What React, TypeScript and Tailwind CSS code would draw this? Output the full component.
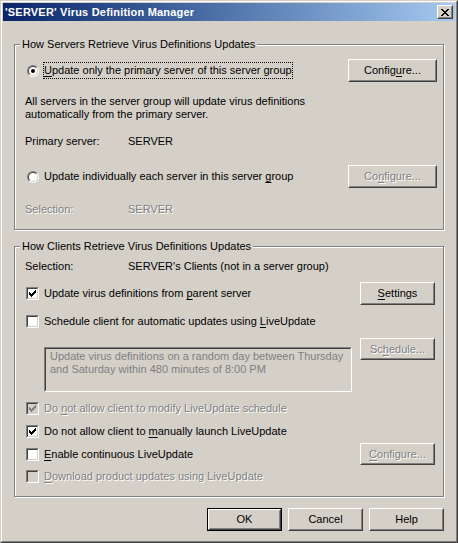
import React from "react";

const DIS = "text-[#808080] [text-shadow:1px_1px_0_#ffffff]";

function Radio({ checked }: { checked?: boolean }) {
  return (
    <span className="flex w-[12px] h-[12px] shrink-0 rounded-full border border-t-[#808080] border-l-[#808080] border-r-white border-b-white">
      <span className="flex flex-1 items-center justify-center rounded-full border border-t-[#404040] border-l-[#404040] border-r-[#D4D0C8] border-b-[#D4D0C8] bg-white">
        {checked && <span className="w-[4px] h-[4px] rounded-full bg-black" />}
      </span>
    </span>
  );
}

function Check({ checked, disabled }: { checked?: boolean; disabled?: boolean }) {
  return (
    <span className="flex w-[13px] h-[13px] shrink-0 border border-t-[#808080] border-l-[#808080] border-r-white border-b-white">
      <span
        className={
          "flex flex-1 items-center justify-center border border-t-[#404040] border-l-[#404040] border-r-[#D4D0C8] border-b-[#D4D0C8] " +
          (disabled ? "bg-[#D4D0C8]" : "bg-white")
        }
      >
        {checked && (
          <svg width="7" height="7" viewBox="0 0 7 7" shapeRendering="crispEdges" fill={disabled ? "#808080" : "#000000"}>
            <rect x="6" y="0" width="1" height="1" />
            <rect x="5" y="1" width="2" height="1" />
            <rect x="0" y="2" width="1" height="1" />
            <rect x="4" y="2" width="3" height="1" />
            <rect x="0" y="3" width="2" height="1" />
            <rect x="3" y="3" width="3" height="1" />
            <rect x="0" y="4" width="5" height="1" />
            <rect x="1" y="5" width="3" height="1" />
            <rect x="2" y="6" width="1" height="1" />
          </svg>
        )}
      </span>
    </span>
  );
}

function Btn({
  children,
  disabled,
  isDefault,
  className = "",
}: {
  children: React.ReactNode;
  disabled?: boolean;
  isDefault?: boolean;
  className?: string;
}) {
  const face = (
    <span className="flex flex-1 border border-t-white border-l-white border-r-[#404040] border-b-[#404040]">
      <span
        className={
          "flex flex-1 items-center justify-center border border-t-[#D4D0C8] border-l-[#D4D0C8] border-r-[#808080] border-b-[#808080] " +
          (disabled ? DIS : "")
        }
      >
        {children}
      </span>
    </span>
  );
  return (
    <div className={"flex shrink-0 bg-[#D4D0C8] " + (isDefault ? "border border-black " : "") + className}>
      {face}
    </div>
  );
}

function U({ children }: { children: React.ReactNode }) {
  return <span className="underline underline-offset-[2px]">{children}</span>;
}

function CheckRow({
  checked,
  disabled,
  children,
  className = "",
}: {
  checked?: boolean;
  disabled?: boolean;
  children: React.ReactNode;
  className?: string;
}) {
  return (
    <div className={"flex items-center h-[13px] ml-[1px] " + className}>
      <Check checked={checked} disabled={disabled} />
      <span className={"ml-[5px] whitespace-nowrap " + (disabled ? DIS : "")}>{children}</span>
    </div>
  );
}

export default function App() {
  return (
    <div className="w-[458px] h-[543px] bg-[#D4D0C8] border border-t-[#D4D0C8] border-l-[#D4D0C8] border-r-[#404040] border-b-[#404040] font-['Liberation_Sans',Arial,sans-serif] text-[11px] leading-[13px] text-black select-none">
      <div className="flex flex-col h-full border border-t-white border-l-white border-r-[#808080] border-b-[#808080] p-[1px]">
        {/* title bar */}
        <div className="flex items-center h-[18px] bg-linear-to-r from-[#0A246A] to-[#A6CAF0] pl-[2px] pr-[2px]">
          <span className="flex-1 font-bold text-white whitespace-nowrap tracking-[0.2px]">'SERVER' Virus Definition Manager</span>
          <Btn className="w-[16px] h-[14px]">
            <svg width="8" height="7" viewBox="0 0 8 7" shapeRendering="crispEdges" fill="#000">
              <rect x="0" y="0" width="2" height="1" />
              <rect x="6" y="0" width="2" height="1" />
              <rect x="1" y="1" width="2" height="1" />
              <rect x="5" y="1" width="2" height="1" />
              <rect x="2" y="2" width="4" height="1" />
              <rect x="3" y="3" width="2" height="1" />
              <rect x="2" y="4" width="4" height="1" />
              <rect x="1" y="5" width="2" height="1" />
              <rect x="5" y="5" width="2" height="1" />
              <rect x="0" y="6" width="2" height="1" />
              <rect x="6" y="6" width="2" height="1" />
            </svg>
          </Btn>
        </div>

        <div className="flex flex-col px-[11px]">
          {/* servers group */}
          <fieldset className="mt-[17px] border border-[#808080] [box-shadow:inset_1px_1px_0_#ffffff,1px_1px_0_#ffffff] pl-[10px] pr-[6px] pb-[13px]">
            <legend className="-ml-[5px] px-[2px] leading-[13px] bg-[#D4D0C8]">How Servers Retrieve Virus Definitions Updates</legend>
            <div className="flex items-center h-[23px] mt-[8px]">
              <span className="ml-[2px]">
                <Radio checked />
              </span>
              <span className="ml-[4px] border border-dotted border-black leading-[15px] whitespace-nowrap">
                <U>U</U>pdate only the primary server of this server group
              </span>
              <Btn className="ml-auto w-[89px] h-[23px]">
                Config<U>u</U>re...
              </Btn>
            </div>
            <p className="mt-[13px]">
              All servers in the server group will update virus definitions
              <br />
              automatically from the primary server.
            </p>
            <div className="flex mt-[14px]">
              <span className="w-[103px]">Primary server:</span>
              <span>SERVER</span>
            </div>
            <div className="flex items-center h-[23px] mt-[17px]">
              <span className="ml-[2px]">
                <Radio />
              </span>
              <span className="ml-[5px] whitespace-nowrap">
                Update individually each server in this server <U>g</U>roup
              </span>
              <Btn disabled className="ml-auto w-[89px] h-[23px]">
                Co<U>n</U>figure...
              </Btn>
            </div>
            <div className={"flex mt-[15px] " + DIS}>
              <span className="w-[103px]">Selection:</span>
              <span>SERVER</span>
            </div>
          </fieldset>

          {/* clients group */}
          <fieldset className="mt-[10px] border border-[#808080] [box-shadow:inset_1px_1px_0_#ffffff,1px_1px_0_#ffffff] pl-[10px] pr-[8px] pb-[13px]">
            <legend className="-ml-[5px] px-[2px] leading-[13px] bg-[#D4D0C8]">How Clients Retrieve Virus Definitions Updates</legend>
            <div className="flex mt-[7px]">
              <span className="w-[103px]">Selection:</span>
              <span>SERVER's Clients (not in a server group)</span>
            </div>
            <div className="flex items-center h-[23px] mt-[9px]">
              <CheckRow checked>
                Update virus definitions from <U>p</U>arent server
              </CheckRow>
              <Btn className="ml-auto w-[75px] h-[23px]">
                <U>S</U>ettings
              </Btn>
            </div>
            <CheckRow className="mt-[10px]">
              Schedule client for automatic updates using <U>L</U>iveUpdate
            </CheckRow>
            <div className="flex items-start mt-[10px]">
              <div className="ml-[19px] mt-[9px] w-[308px] h-[45px] flex border border-t-[#808080] border-l-[#808080] border-r-white border-b-white">
                <div className="flex-1 border border-t-[#404040] border-l-[#404040] border-r-[#D4D0C8] border-b-[#D4D0C8] bg-[#D4D0C8] text-[#808080] pl-[4px] pt-[1px]">
                  Update virus definitions on a random day between Thursday
                  <br />
                  and Saturday within 480 minutes of 8:00 PM
                </div>
              </div>
              <Btn disabled className="ml-auto w-[75px] h-[22px]">
                Sc<U>h</U>edule...
              </Btn>
            </div>
            <CheckRow checked disabled className="mt-[10px]">
              Do <U>n</U>ot allow client to modify LiveUpdate schedule
            </CheckRow>
            <CheckRow checked className="mt-[10px]">
              Do not allow client to <U>m</U>anually launch LiveUpdate
            </CheckRow>
            <div className="flex items-center h-[22px] mt-[5px]">
              <CheckRow>
                <U>E</U>nable continuous LiveUpdate
              </CheckRow>
              <Btn disabled className="ml-auto w-[75px] h-[22px]">
                <U>C</U>onfigure...
              </Btn>
            </div>
            <CheckRow disabled className="mt-[5px]">
              <U>D</U>ownload product updates using LiveUpdate
            </CheckRow>
          </fieldset>

          {/* dialog buttons */}
          <div className="flex justify-end gap-[6px] mt-[11px]">
            <Btn isDefault className="w-[75px] h-[23px]">
              OK
            </Btn>
            <Btn className="w-[75px] h-[23px]">Cancel</Btn>
            <Btn className="w-[75px] h-[23px]">Help</Btn>
          </div>
        </div>
      </div>
    </div>
  );
}
